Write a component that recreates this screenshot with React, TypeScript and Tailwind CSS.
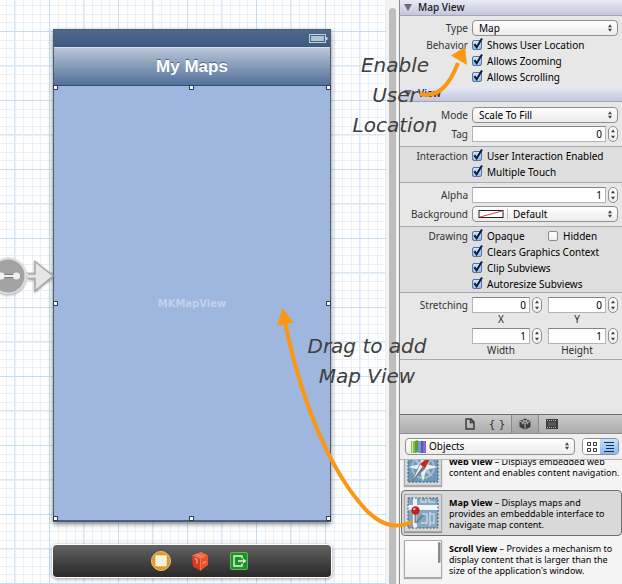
import React, { useState } from "react";

const cx = (...parts: (string | false)[]) => parts.filter(Boolean).join(" ");

function Steppers() {
  return (
    <span className="flex h-4 w-[10px] shrink-0 flex-col items-center justify-center rounded-full border border-[#8e8e8e] bg-linear-to-b from-white to-[#ededed]">
      <svg viewBox="0 0 6 10" className="h-[10px] w-[6px]" fill="#3c3c3c">
        <path d="M3 0.4 5 3.300H1zM3 9.600 1 6.700h4z" />
      </svg>
    </span>
  );
}

function NumberField({ id, value, label }: { id: string; value: string; label?: string }) {
  return (
    <div className="min-w-0 flex-1">
      <div className="flex gap-[2px]">
        <input
          id={id}
          defaultValue={value}
          className="h-4 w-full min-w-0 flex-1 border border-[#b4b4b4] border-t-[#858585] bg-white px-[3px] text-right leading-[14px] text-black outline-none"
        />
        <Steppers />
      </div>
      {label && (
        <label htmlFor={id} className="block pr-3 text-center leading-3 text-[#2c2c2c]">
          {label}
        </label>
      )}
    </div>
  );
}

function Popup({ id, options, pad, children }: { id: string; options: string[]; pad?: boolean; children?: React.ReactNode }) {
  return (
    <div className="relative min-w-0 flex-1">
      <select
        id={id}
        className={cx(
          "block h-4 w-full appearance-none rounded-[4px] border border-[#8f8f8f] bg-linear-to-b from-white to-[#ececec] leading-[14px] text-black outline-none",
          pad ? "pl-[40px]" : "pl-[6px]"
        )}
      >
        {options.map((o) => (
          <option key={o}>{o}</option>
        ))}
      </select>
      {children}
      <svg viewBox="0 0 6 8" className="pointer-events-none absolute top-1 right-[5px] h-2 w-[6px]" fill="#444">
        <path d="M3 0.3 5 3.2H1zM3 7.7 1 4.8h4z" />
      </svg>
    </div>
  );
}

function Check({ label, on = true }: { label: string; on?: boolean }) {
  const [checked, setChecked] = useState(on);
  return (
    <label className="flex h-4 items-center gap-[5px] text-black">
      <span className="relative flex">
        <input
          type="checkbox"
          checked={checked}
          onChange={() => setChecked(!checked)}
          className="h-[10px] w-[10px] appearance-none rounded-[2px] border border-[#8a8a8a] bg-linear-to-b from-white to-[#efefef] checked:border-[#5274a8] checked:from-[#d5e6fa] checked:to-[#8fbcf0]"
        />
        {checked && (
          <svg viewBox="0 0 12 13" className="pointer-events-none absolute -top-[3px] left-0 h-[13px] w-3" fill="none" stroke="#0d1c38" strokeWidth="2">
            <path d="M2.3 7.2 4.6 10.2 10 1.4" />
          </svg>
        )}
      </span>
      {label}
    </label>
  );
}

function Field({ label, htmlFor, children }: { label: string; htmlFor?: string; children: React.ReactNode }) {
  const cls = "w-[68px] shrink-0 text-right leading-4 text-[#333]";
  return (
    <div className="flex gap-1 pr-1">
      {htmlFor ? (
        <label htmlFor={htmlFor} className={cls}>
          {label}
        </label>
      ) : (
        <span className={cls}>{label}</span>
      )}
      {children}
    </div>
  );
}

function Header({ title }: { title: string }) {
  return (
    <h2 className="flex h-4 items-center gap-[6px] border-b border-[#a5a5b0] bg-linear-to-b from-[#e9eaf5] to-[#c3c7dc] pl-1 font-['Open_Sans','Noto_Sans',sans-serif] font-semibold text-[#1c1c1c]">
      <svg viewBox="0 0 8 7" className="h-[7px] w-2" fill="#6d6f78">
        <path d="M0 0h8L4 7z" />
      </svg>
      {title}
    </h2>
  );
}

function Handle({ place }: { place: string }) {
  return <i className={cx("absolute h-[5px] w-[5px] border border-[#2c3d55] bg-white", place)} />;
}

function Compass() {
  return (
    <svg viewBox="0 0 36 36" className="h-9 w-9">
      <rect x="3" y="3" width="30" height="30" fill="#6f97b6" />
      <circle cx="18" cy="18" r="11" fill="none" stroke="#9bbbd0" strokeWidth="2" />
      <path d="M8 8l8 6 12-6-6 10 6 10-10-6-10 6 6-10z" fill="#a9c5d6" />
      <path d="M18 3l3 12 12 3-12 3-3 12-3-12-12-3 12-3z" fill="#e4eef3" />
      <path d="M28 4 15 15l5 4.500z" fill="#c8281c" />
      <path d="M7 32 15 15l5 4.500z" fill="#f5f5f5" stroke="#5c6a74" strokeWidth="0.700" />
      <path d="M7 32l10.500-14.500L20 19.500z" fill="#6d7a84" />
      <rect x="3" y="3" width="30" height="30" fill="none" stroke="#35597d" strokeDasharray="2 1.500" />
    </svg>
  );
}

function MapPin() {
  return (
    <svg viewBox="0 0 36 36" className="h-9 w-9">
      <rect x="3" y="3" width="30" height="30" fill="#86a6bf" />
      <path d="M3 10h30v5H3zM8 3h4v30H8z" fill="#f1f4f6" />
      <path d="M16 3v4h5V3M24 3v4h6M17 19h5v9h-6M25 17v14M25 19h4v9h-4" fill="none" stroke="#c6d7e2" strokeWidth="1.500" />
      <path d="M11 28l7-8" stroke="#50697c" strokeWidth="2" opacity=".6" />
      <rect x="3" y="3" width="30" height="30" fill="none" stroke="#35597d" strokeDasharray="2 1.500" />
      <path d="M10.500 17v11" stroke="#7d868c" strokeWidth="2" />
      <circle cx="10.500" cy="15.500" r="4.200" fill="#c3221c" />
      <circle cx="9.300" cy="14" r="1.300" fill="#f2a59c" />
    </svg>
  );
}

function ScrollThumb() {
  return (
    <svg viewBox="0 0 36 36" className="h-9 w-9">
      <rect x="33" y="1" width="2.500" height="21" rx="1.200" fill="#8a8a8a" />
    </svg>
  );
}

const library = [
  { name: "Web View", lines: ["Displays embedded web", "content and enables content navigation."], icon: <Compass />, selected: false },
  { name: "Map View", lines: ["Displays maps and", "provides an embeddable interface to", "navigate map content."], icon: <MapPin />, selected: true },
  { name: "Scroll View", lines: ["Provides a mechanism to", "display content that is larger than the", "size of the application's window."], icon: <ScrollThumb />, selected: false },
];

function Canvas() {
  return (
    <main className="relative min-w-0 flex-1 bg-white bg-[linear-gradient(90deg,#c4dff5_1px,transparent_1px),linear-gradient(#c4dff5_1px,transparent_1px),linear-gradient(90deg,transparent_34px,#d8e8f7_34px,#d8e8f7_35px,transparent_35px),linear-gradient(transparent_34px,#d8e8f7_34px,#d8e8f7_35px,transparent_35px),repeating-linear-gradient(90deg,#e8f0f9_0,#e8f0f9_1px,transparent_1px,transparent_12.5%),repeating-linear-gradient(#e8f0f9_0,#e8f0f9_1px,transparent_1px,transparent_12.5%)] bg-[size:69px_69px] bg-[position:49px_31px] pt-[29px] pl-[53px]">
      <section className="w-[278px] border border-[#4c5c70] shadow-[0_2px_5px_rgba(0,0,0,0.5)]">
        <div className="flex h-[17px] items-center justify-end bg-linear-to-b from-[#4d6a8b] to-[#3c5a80] pr-[2px]">
          <svg viewBox="0 0 19 9" className="h-[9px] w-[19px]">
            <rect x="0.500" y="0.500" width="16" height="8" fill="none" stroke="#c3cddb" />
            <rect x="2" y="2" width="13" height="5" fill="#b4c1d2" />
            <path d="M17 3h1.500v3H17z" fill="#c3cddb" />
          </svg>
        </div>
        <div className="flex h-[39px] items-center justify-center border-t border-b border-t-[#d5deea] border-b-[#2f4f7c] bg-linear-to-b from-[#bac6d7] to-[#52709a]">
          <h1 className="font-['Liberation_Sans',Arial,sans-serif] text-[17px] font-bold text-white [text-shadow:0_-1px_0_#4f6481]">My Maps</h1>
        </div>
        <div className="relative flex h-[435px] items-center justify-center border-b border-[#3f6699] bg-[#9fb6de] font-['DejaVu_Sans',sans-serif] text-[10px] font-bold text-[#c2d0eb]">
          MKMapView
          <Handle place="-top-px -left-px" />
          <Handle place="-top-px left-[135px]" />
          <Handle place="-top-px -right-px" />
          <Handle place="top-[215px] -left-px" />
          <Handle place="top-[215px] -right-px" />
          <Handle place="-bottom-px -left-px" />
          <Handle place="-bottom-px left-[135px]" />
          <Handle place="-bottom-px -right-px" />
        </div>
      </section>
      <div className="mt-[23px] flex h-8 w-[278px] items-center justify-center gap-[19px] rounded-[4px] bg-linear-to-b from-[#636363] to-[#292929] pl-4 shadow-[0_0_0_1px_#fff,0_1px_4px_1px_rgba(0,0,0,0.4)]">
        <svg viewBox="0 0 20 20" className="h-5 w-5">
          <circle cx="10" cy="10" r="9.500" fill="#d99a2b" stroke="#f0c36a" />
          <path d="M4 4h12v11H4z" fill="#e9c48c" />
          <rect x="5" y="5" width="10" height="10" fill="#f7efdc" stroke="#fff" strokeDasharray="1.500 1" />
        </svg>
        <svg viewBox="0 0 20 20" className="h-5 w-5">
          <path d="M2 4.500 11 1l7 3.500V14l-8 5.500-7-4z" fill="#d93a1c" />
          <path d="M2 4.500 11 1l7 3.500L10.500 8z" fill="#f0704c" />
          <path d="M10.500 8 18 4.500V14l-7.500 5.500z" fill="#e8512c" />
          <path d="M4.500 7.500 7 8.500v4M12.500 12.500l3.500-2" fill="none" stroke="#f9a58b" strokeWidth="1.200" />
          <path d="M10.500 8v11.500M6 3l7.500 4" fill="none" stroke="#f6906c" strokeWidth="0.700" />
        </svg>
        <svg viewBox="0 0 20 20" className="h-5 w-5">
          <rect x="1.500" y="1.500" width="17" height="17" rx="1.500" fill="#1f9127" stroke="#57b852" />
          <path d="M13 7.500V5H5v10h8v-2.500M9 10h6" fill="none" stroke="#e3f5df" strokeWidth="1.400" />
          <path d="M14 7.200 17.300 10 14 12.800z" fill="#e3f5df" />
        </svg>
      </div>
      <svg viewBox="0 0 54 44" className="absolute top-[254px] left-0 h-[44px] w-[54px] drop-shadow-[0_1px_1px_rgba(0,0,0,0.35)]">
        <circle cx="8" cy="22" r="17.500" fill="#a3a3a3" stroke="#dedede" strokeWidth="2" />
        <path d="M1 22h15" stroke="#6f6f6f" strokeWidth="3.500" />
        <circle cx="1" cy="22" r="3.500" fill="#f1f1f1" />
        <circle cx="16.500" cy="22" r="3.500" fill="#f1f1f1" />
        <path d="M1 22h15" stroke="#f1f1f1" strokeWidth="2" />
        <path d="M28 20h7V7.500L53 22 35 37V24.500h-7" fill="#e6e6e6" stroke="#a8a8a8" strokeWidth="1.500" />
      </svg>
    </main>
  );
}

function Inspector() {
  const tab = "flex h-full w-[27px] items-center justify-center";
  return (
    <aside className="flex w-[223px] shrink-0 flex-col border-l border-[#8c8c8c] bg-[#e7e7e7]">
      <Header title="Map View" />
      <section className="flex flex-col gap-px pt-1 pb-px">
        <Field label="Type" htmlFor="type">
          <Popup id="type" options={["Map", "Satellite", "Hybrid"]} />
        </Field>
        <Field label="Behavior">
          <div>
            <Check label="Shows User Location" />
            <Check label="Allows Zooming" />
            <Check label="Allows Scrolling" />
          </div>
        </Field>
      </section>
      <Header title="View" />
      <section className="flex flex-col gap-[3px] border-b border-[#a9a9a9] pt-[5px] pb-1">
        <Field label="Mode" htmlFor="mode">
          <Popup id="mode" options={["Scale To Fill", "Aspect Fit", "Aspect Fill"]} />
        </Field>
        <Field label="Tag" htmlFor="tag">
          <NumberField id="tag" value="0" />
        </Field>
      </section>
      <section className="border-b border-[#a9a9a9] bg-[#dedede] pt-px pb-[2px]">
        <Field label="Interaction">
          <div>
            <Check label="User Interaction Enabled" />
            <Check label="Multiple Touch" />
          </div>
        </Field>
      </section>
      <section className="flex flex-col gap-[3px] border-b border-[#a9a9a9] py-1">
        <Field label="Alpha" htmlFor="alpha">
          <NumberField id="alpha" value="1" />
        </Field>
        <Field label="Background" htmlFor="background">
          <Popup id="background" options={["Default"]} pad>
            <svg viewBox="0 0 30 10" className="pointer-events-none absolute top-[3px] left-[6px] h-[10px] w-[30px]">
              <rect x="1" y="1.500" width="24" height="7" fill="#fff" stroke="#222" />
              <path d="M2 8 24 2" stroke="#d5453a" />
              <path d="M29.500 0v10" stroke="#bbb" />
            </svg>
          </Popup>
        </Field>
      </section>
      <section className="border-b border-[#a9a9a9] bg-[#dedede] pt-px">
        <Field label="Drawing">
          <div className="flex-1">
            <div className="grid grid-cols-[76px_1fr]">
              <Check label="Opaque" />
              <Check label="Hidden" on={false} />
            </div>
            <Check label="Clears Graphics Context" />
            <Check label="Clip Subviews" />
            <Check label="Autoresize Subviews" />
          </div>
        </Field>
      </section>
      <section className="border-b border-[#a9a9a9] pt-1 pb-[3px]">
        <Field label="Stretching">
          <div className="grid flex-1 grid-cols-2 gap-x-[6px] gap-y-[3px]">
            <NumberField id="sx" value="0" label="X" />
            <NumberField id="sy" value="0" label="Y" />
            <NumberField id="sw" value="1" label="Width" />
            <NumberField id="sh" value="1" label="Height" />
          </div>
        </Field>
      </section>
      <div className="flex-1" />
      <nav className="flex h-5 shrink-0 items-center justify-center border-t border-b border-t-[#6f6f6f] border-b-[#8f8f8f] bg-linear-to-b from-[#cbcbcb] to-[#adadad]">
        <button aria-label="File templates" className={tab}>
          <svg viewBox="0 0 10 12" className="h-3 w-[10px]" fill="none" stroke="#3d3d3d" strokeWidth="1.500">
            <path d="M1 1h5l3 3v7H1zM5.500 1v3.500H9" />
          </svg>
        </button>
        <button aria-label="Code snippets" className={cx(tab, "gap-[3px] font-['DejaVu_Sans',sans-serif] text-[11px] leading-none text-[#333]")}>
          <span>{"{"}</span>
          <span>{"}"}</span>
        </button>
        <button aria-label="Objects" className="flex h-full w-7 items-center justify-center border-r border-l border-[#8a8a8a] bg-linear-to-b from-[#bdbdbd] to-[#a2a2a2]">
          <svg viewBox="0 0 12 12" className="h-3 w-3">
            <path d="M6 0.500 11.500 3v6L6 11.700.5 9V3z" fill="#3d3d3d" />
            <path d="M.7 3.200 6 5.600l5.300-2.400M6 5.600v6M3.300 1.800l5.400 2.500v2M8.700 1.800 3.300 4.300v2" fill="none" stroke="#c4c4c4" strokeWidth="0.900" />
          </svg>
        </button>
        <button aria-label="Media" className={tab}>
          <svg viewBox="0 0 12 10" className="h-[10px] w-3">
            <rect x="0" y="0" width="12" height="10" fill="#3d3d3d" />
            <path d="M1 1.500h10M1 8.500h10" stroke="#b5b5b5" strokeDasharray="1 1" />
            <rect x="2" y="3" width="8" height="4" fill="#575757" />
          </svg>
        </button>
      </nav>
      <div className="flex h-[26px] shrink-0 items-center gap-[7px] border-b border-[#b5b5b5] bg-[#efefef] pr-[3px] pl-[5px]">
        <div className="relative flex-1">
          <select aria-label="Library" className="block h-[17px] w-full appearance-none rounded-[4px] border border-[#8f8f8f] bg-linear-to-b from-white to-[#ececec] pl-[23px] leading-[15px] text-black outline-none">
            <option>Objects</option>
          </select>
          <svg viewBox="0 0 15 13" className="pointer-events-none absolute top-[2px] left-[6px] h-[13px] w-[15px]">
            <path d="M0 1h4v12H0z" fill="#8cc04d" />
            <path d="M1 1h1v12H1z" fill="#d0eaa9" />
            <path d="M4 1l3-1v12l-3 1z" fill="#5f9a33" />
            <path d="M7 1h3v12H7z" fill="#6e9be0" />
            <path d="M10 1h2v12h-2z" fill="#4465ae" />
            <path d="M12 1h3v12h-3z" fill="#9a63c7" />
          </svg>
          <svg viewBox="0 0 6 8" className="pointer-events-none absolute top-1 right-[5px] h-2 w-[6px]" fill="#444">
            <path d="M3 0.300 5 3.200H1zM3 7.700 1 4.800h4z" />
          </svg>
        </div>
        <div className="flex h-[17px] overflow-hidden rounded-[4px] border border-[#8f8f8f]">
          <button aria-label="Icon view" className="flex w-[17px] items-center justify-center bg-white">
            <svg viewBox="0 0 10 10" className="h-[10px] w-[10px]" fill="none" stroke="#333">
              <path d="M.5.5h3v3h-3zM6.500.5h3v3h-3zM.5 6.500h3v3h-3zM6.500 6.500h3v3h-3z" />
            </svg>
          </button>
          <button aria-label="List view" className="flex w-[18px] items-center justify-center bg-linear-to-b from-[#c9e0fa] to-[#86b9f2]">
            <svg viewBox="0 0 10 10" className="h-[10px] w-[10px]" stroke="#1c3050">
              <path d="M0 .5h10M2 3.500h8M2 6.500h8M0 9.500h10" />
            </svg>
          </button>
        </div>
      </div>
      <div className="h-[124px] shrink-0 overflow-hidden bg-[#f4f4f4]">
        <ul className="-mt-4">
          {library.map((item) => (
            <li
              key={item.name}
              className={cx(
                "ml-px flex h-[46px] items-center gap-[7px] rounded-[4px] border pl-[2px] text-[9px] leading-[11px] text-black",
                item.selected ? "border-[#707070] bg-[#d9d9d9]" : "border-transparent"
              )}
            >
              <span
                className={cx(
                  "flex h-[38px] w-[38px] shrink-0 items-center justify-center border border-[#a8a8a8] shadow-[0_1px_1px_rgba(0,0,0,0.3)]",
                  item.name === "Scroll View" ? "bg-linear-to-b from-white to-[#f1f1f1]" : "bg-[#d6d6d6]"
                )}
              >
                {item.icon}
              </span>
              <p className="whitespace-nowrap">
                <b>{item.name}</b> – {item.lines[0]}
                {item.lines.slice(1).map((l) => (
                  <span key={l} className="block">
                    {l}
                  </span>
                ))}
              </p>
            </li>
          ))}
        </ul>
      </div>
    </aside>
  );
}

export default function App() {
  return (
    <div className="relative flex h-screen w-full overflow-hidden bg-white font-['Noto_Sans','Lucida_Grande',sans-serif] text-[10px]">
      <Canvas />
      <div className="w-[13px] shrink-0 bg-[#f3f3f3] pt-2 pl-[3px]">
        <div className="h-full w-[7px] rounded-t-full bg-[#bebebe]" />
      </div>
      <Inspector />
      <p className="pointer-events-none absolute top-[50px] left-[345px] w-[100px] text-center font-['DejaVu_Sans',sans-serif] text-[20px] leading-[30px] text-[#404040] italic">
        Enable User Location
      </p>
      <p className="pointer-events-none absolute top-[331px] left-[302px] w-[130px] text-center font-['DejaVu_Sans',sans-serif] text-[20px] leading-[30px] text-[#404040] italic">
        Drag to add Map View
      </p>
      <svg viewBox="0 0 622 584" className="pointer-events-none absolute top-0 left-0 h-[584px] w-[622px]" fill="none" stroke="#fb9713" strokeWidth="4">
        <path d="M420 94C438 98 449 86 458 63" />
        <path d="M465 47 451 55.500 467 65z" fill="#fb9713" stroke="none" />
        <path d="M412 522C400 527 386 529 368 512C332 475 302 405 285 322" />
        <path d="M282.500 308 277 326 293.500 322.500z" fill="#fb9713" stroke="none" />
      </svg>
    </div>
  );
}
